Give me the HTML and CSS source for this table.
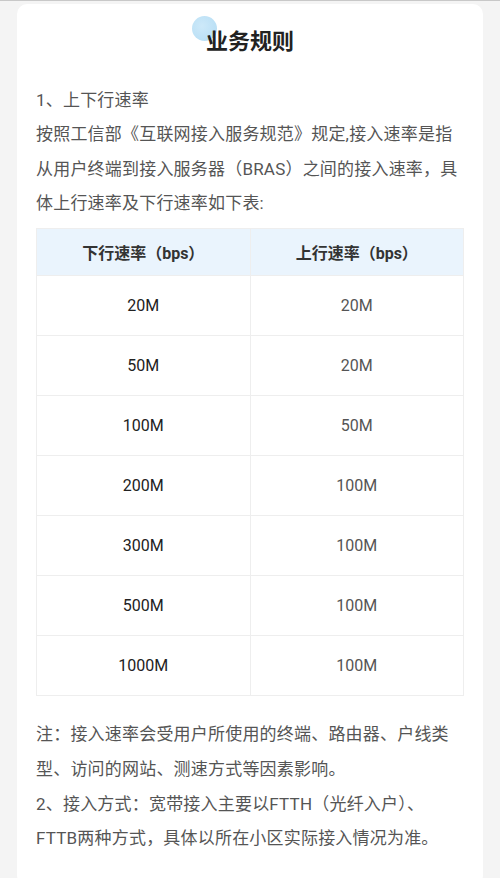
FILE: index.html
```html
<!DOCTYPE html>
<html lang="zh-CN">
<head>
    <meta charset="UTF-8">
    <meta name="viewport" content="width=device-width, initial-scale=1.0">
    <title>业务规则</title>
    <link rel="stylesheet" href="styles.css">
</head>
<body>
    <div class="card">
        <h2 class="title"><span class="title-text">业务规则</span></h2>
        <p class="text">1、上下行速率<br>按照工信部《互联网接入服务规范》规定,接入速率是指从用户终端到接入服务器（BRAS）之间的接入速率，具体上行速率及下行速率如下表:</p>
        <table class="rates">
            <thead>
                <tr><th>下行速率（bps）</th><th>上行速率（bps）</th></tr>
            </thead>
            <tbody>
                <tr><td>20M</td><td>20M</td></tr>
                <tr><td>50M</td><td>20M</td></tr>
                <tr><td>100M</td><td>50M</td></tr>
                <tr><td>200M</td><td>100M</td></tr>
                <tr><td>300M</td><td>100M</td></tr>
                <tr><td>500M</td><td>100M</td></tr>
                <tr><td>1000M</td><td>100M</td></tr>
            </tbody>
        </table>
        <p class="text note">注：接入速率会受用户所使用的终端、路由器、户线类型、访问的网站、测速方式等因素影响。<br>2、接入方式：宽带接入主要以FTTH（光纤入户）、FTTB两种方式，具体以所在小区实际接入情况为准。</p>
    </div>
</body>
</html>
```

FILE: styles.css
```css
body {
    margin: 0;
    padding: 3px 0 0;
    background: #f4f4f4;
    border-top: 1px solid #c8c8c8;
    font-family: 'Roboto', 'Noto Sans CJK SC', sans-serif;
    color: #555;
}
.card {
    margin: 0 17px;
    padding: 18px 19px 30px;
    min-height: 826px;
    background: #fff;
    border-radius: 10px;
}
.title {
    margin: 0 0 21px;
    text-align: center;
    font-size: 22px;
    line-height: 40px;
    font-weight: bold;
    color: #222;
}
.title-text {
    position: relative;
    z-index: 0;
}
/* 标题左上角的小圆点 */
.title-text::before {
    content: "";
    position: absolute;
    z-index: -1;
    left: -14px;
    top: -13px;
    width: 25px;
    height: 25px;
    border-radius: 50%;
    background: radial-gradient(circle at 40% 40%, #cde9f9, #b3dcf4);
}
.text {
    margin: 0;
    font-size: 17px;
    letter-spacing: 0.2px;
    line-height: 34.3px;
}
.rates {
    width: 100%;
    margin: 8px 0 21px;
    border-collapse: collapse;
    table-layout: fixed;
    font-size: 16px;
}
.rates th, .rates td {
    padding: 0;
    border: 1px solid #eee;
    text-align: center;
}
.rates th {
    height: 46px;
    background: #eaf4fd;
    color: #333;
    font-weight: bold;
}
.rates td {
    height: 59px;
    color: #222;
}
.rates td + td {
    color: #555;
}
.note {
    line-height: 34.7px;
}
```
